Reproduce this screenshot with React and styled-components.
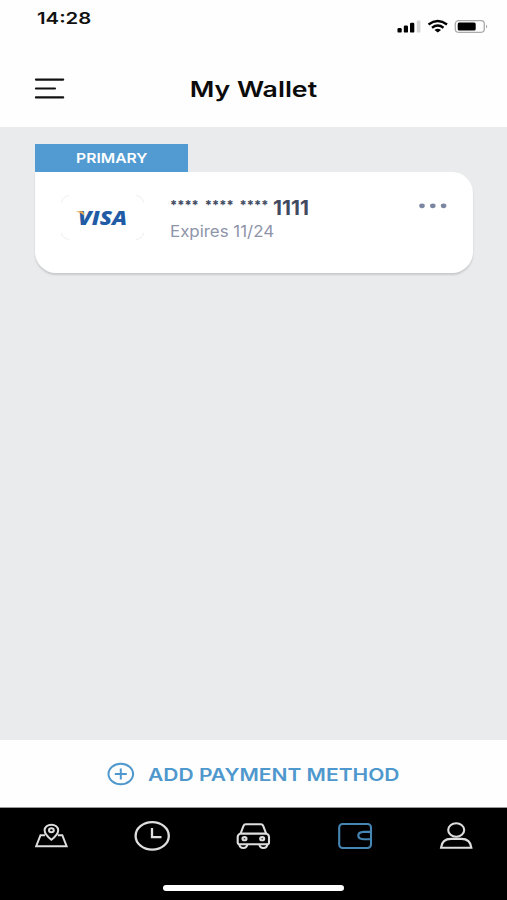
import React from 'react'
import styled, { createGlobalStyle } from 'styled-components'

const GlobalStyle = createGlobalStyle`
	* {
		box-sizing: border-box;
	}

	body {
		margin: 0;
		background-color: #eaebed;
		font-family: Inter, 'Liberation Sans', sans-serif;
	}

	svg {
		display: block;
	}
`

const Screen = styled.div`
	display: flex;
	flex-direction: column;
	width: 100%;
	height: 900px;
	overflow: hidden;
`

/* wide lettering: glyphs are stretched sideways from their origin */
const Wide = styled.span`
	display: inline-block;
	white-space: pre;
	transform: scaleX(${props => props.$stretch});
	transform-origin: ${props => props.$origin || 'left'} center;
`

const StatusBar = styled.div`
	display: flex;
	justify-content: space-between;
	height: 50px;
	padding: 0 18px 0 37px;
	background-color: #fefefe;
`

const Time = styled.div`
	padding-top: 8px;
	color: #111;
	font-size: 16px;
	font-weight: 600;
	line-height: 21px;
`

const StatusIcons = styled.div`
	padding-top: 19px;
`

const Header = styled.header`
	display: grid;
	grid-template-columns: 100px 1fr 100px;
	align-items: center;
	height: 77px;
	background-color: #fefefe;
`

const MenuButton = styled.button`
	padding: 0 0 0 34px;
	border: 0;
	background: none;
`

const Title = styled.h1`
	margin: 0;
	color: #0b0b0b;
	font-size: 21.5px;
	font-weight: 600;
	line-height: 28px;
	text-align: center;
`

const Content = styled.main`
	flex: 1;
	padding: 17px 34px 0 35px;
	background-color: #eaebed;
`

const Badge = styled.div`
	width: 153px;
	height: 28px;
	background-color: #519bd2;
	color: #fff;
	font-size: 13.5px;
	font-weight: 600;
	line-height: 29px;
	text-align: center;
`

const Card = styled.section`
	display: flex;
	height: 101px;
	padding: 23px 25px 0 26px;
	border-radius: 0 21px 21px 21px;
	background-color: #fff;
	box-shadow: 0 2px 2px rgba(0, 0, 0, 0.14);
`

const CardLogo = styled.div`
	display: flex;
	align-items: center;
	justify-content: center;
	width: 83px;
	height: 45px;
`

const CardInfo = styled.div`
	flex: 1;
	padding-left: 26px;
`

const CardNumber = styled.div`
	display: flex;
	height: 25px;
	color: #414a5f;
	line-height: 27px;
`

const Stars = styled.div`
	width: 103px;
	font-size: 13px;
	font-weight: 700;
	line-height: 20px;
	word-spacing: 3px;
`

const LastDigits = styled.div`
	font-size: 20px;
	font-weight: 700;
`

const Expiry = styled.div`
	color: #8e94aa;
	font-size: 16px;
	line-height: 22px;
`

const MoreButton = styled.button`
	align-self: flex-start;
	padding: 8px 0 0;
	border: 0;
	background: none;
`

const AddButton = styled.button`
	display: flex;
	align-items: center;
	height: 68px;
	padding: 1px 0 0 107px;
	border: 0;
	border-bottom: 1px solid #999;
	background-color: #fefefe;
	color: #4f98cd;
	font-family: inherit;
	font-size: 17px;
	font-weight: 600;
`

const AddLabel = styled.span`
	padding: 1px 0 0 13px;
`

const TabBar = styled.nav`
	height: 92px;
	background-color: #000;
`

const Tabs = styled.div`
	display: grid;
	grid-template-columns: repeat(5, 1fr);
	height: 77px;
`

const Tab = styled.a`
	display: flex;
	justify-content: center;
	padding-top: 10px;
	color: ${props => (props.$active ? '#4586b5' : '#dedede')};
`

const HomeIndicator = styled.div`
	width: 181px;
	height: 6px;
	margin: 0 auto;
	border-radius: 3px;
	background-color: #fff;
`

const SignalIcons = () => (
	<svg width='92' height='15' viewBox='0 0 92 15'>
		<rect x='0.5' y='9' width='4.2' height='4.6' rx='1.2' />
		<rect x='6.8' y='6.6' width='4.2' height='7' rx='1.2' />
		<rect x='13' y='3.7' width='4.3' height='9.9' rx='1.2' />
		<rect x='19.8' y='1.5' width='3.6' height='12.1' rx='1.2' fill='#d5d5d5' />
		<g fill='none' stroke='#000' strokeWidth='2.4'>
			<path d='M31.5 5.5Q40.8 -1.3 50 5.5' />
			<path d='M35 8.8Q40.8 4.4 46.5 8.8' />
		</g>
		<path d='M37.5 11Q40.8 8.6 44 11L40.8 13.6Z' />
		<rect x='58.3' y='1.7' width='29' height='11.6' rx='3.2' fill='none' stroke='#aaa' strokeWidth='1.3' />
		<rect x='60.7' y='3.4' width='18' height='8.1' rx='1.5' />
		<path d='M89 5.4Q91.4 7.5 89 9.6Z' fill='#aaa' />
	</svg>
)

const MenuIcon = () => (
	<svg width='32' height='24' viewBox='0 0 32 24' fill='none' stroke='#111' strokeWidth='2.1' strokeLinecap='round'>
		<path d='M1.9 2.6H29.2M1.9 11.5H21M1.9 20.4H29.2' />
	</svg>
)

const VisaLogo = () => (
	<svg width='83' height='45' viewBox='0 0 83 45'>
		<path
			d='M.5 7.5Q1.5 1.5 8 .5M75 .5Q81.5 1.5 82.5 7.5M.5 38Q1.5 43.5 8 44.5M75 44.5Q81.5 43.5 82.5 38'
			fill='none'
			stroke='#eee'
		/>
		<text
			x='17'
			y='30'
			fill='#215ba5'
			fontFamily='Open Sans, sans-serif'
			fontSize='19'
			fontStyle='italic'
			fontWeight='800'
			textLength='49'
			lengthAdjust='spacingAndGlyphs'
		>
			VISA
		</text>
		<path d='M14.6 16.2H20.5Q22.3 16.2 22.6 17.6L23.2 20.4Q20 17.6 14.6 16.2Z' fill='#e9a64b' />
	</svg>
)

const DotsIcon = () => (
	<svg width='30' height='6' viewBox='0 0 30 6' fill='#7b87a1'>
		<ellipse cx='4' cy='2.8' rx='2.8' ry='2.4' />
		<ellipse cx='14.8' cy='2.8' rx='2.8' ry='2.4' />
		<ellipse cx='25.6' cy='2.8' rx='2.8' ry='2.4' />
	</svg>
)

const PlusIcon = () => (
	<svg width='28' height='24' viewBox='0 0 28 24' fill='none' stroke='currentColor' strokeWidth='2'>
		<ellipse cx='13.8' cy='12' rx='12.3' ry='10.2' />
		<path d='M7.8 12H19.8M13.8 6.6V17.4' />
	</svg>
)

const MapIcon = () => (
	<svg width='36' height='36' viewBox='0 0 36 36' fill='none' stroke='currentColor' strokeWidth='2'>
		<path d='M12 17.2H7.5L3.2 28.2H33.6L29.3 17.2H24.8' />
		<path d='M18.4 21.8Q11.6 16.5 11.6 12.3A6.8 5.6 0 0 1 25.2 12.3Q25.2 16.5 18.4 21.8Z' />
		<ellipse cx='18.4' cy='12.3' rx='2.4' ry='2' />
	</svg>
)

const ClockIcon = () => (
	<svg width='38' height='36' viewBox='0 0 38 36' fill='none' stroke='currentColor' strokeWidth='2.3'>
		<ellipse cx='19.2' cy='17.9' rx='16.6' ry='13.7' />
		<path d='M19 10V19.2H28.5' />
	</svg>
)

const CarIcon = () => (
	<svg width='36' height='36' viewBox='0 0 36 36' fill='none' stroke='currentColor' strokeWidth='2.1'>
		<path d='M5.6 15.5L8.5 7.9Q9.1 6.2 10.8 6.2H25.9Q27.6 6.2 28.2 7.9L31.1 15.5' />
		<path d='M5.2 15.6H31.5Q34 16.6 34 19V24.6Q34 26.2 32.4 26.2H4.3Q2.7 26.2 2.7 24.6V19Q2.7 16.6 5.2 15.6Z' />
		<path d='M4.2 26.2Q4.6 30 8.3 30T12.4 26.2M24.3 26.2Q24.7 30 28.4 30T32.5 26.2' />
		<ellipse cx='9.5' cy='20.7' rx='2' ry='1.6' />
		<ellipse cx='27.2' cy='20.7' rx='2' ry='1.6' />
	</svg>
)

const WalletIcon = () => (
	<svg width='36' height='36' viewBox='0 0 36 36' fill='none' stroke='currentColor' strokeWidth='2.1'>
		<rect x='2.2' y='6' width='31.8' height='24' rx='3.5' />
		<path d='M34 13.9H26.5Q21.3 14.1 21.3 17.6T26.5 21.3H34' />
	</svg>
)

const UserIcon = () => (
	<svg width='36' height='36' viewBox='0 0 36 36' fill='none' stroke='currentColor' strokeWidth='2.1'>
		<ellipse cx='18.2' cy='12' rx='8' ry='6.8' />
		<path d='M3 29.8Q4 20.9 13 20.9H23.4Q32.4 20.9 33.4 29.8Z' />
	</svg>
)

export default () => {
	return (
		<Screen>
			<GlobalStyle />
			<StatusBar>
				<Time>
					<Wide $stretch={1.27}>14:28</Wide>
				</Time>
				<StatusIcons>
					<SignalIcons />
				</StatusIcons>
			</StatusBar>
			<Header>
				<MenuButton aria-label='Menu'>
					<MenuIcon />
				</MenuButton>
				<Title>
					<Wide $stretch={1.24} $origin='center'>My Wallet</Wide>
				</Title>
			</Header>
			<Content>
				<Badge>
					<Wide $stretch={1.16} $origin='center'>PRIMARY</Wide>
				</Badge>
				<Card>
					<CardLogo>
						<VisaLogo />
					</CardLogo>
					<CardInfo>
						<CardNumber>
							<Stars>
								<Wide $stretch={0.99}>**** **** ****</Wide>
							</Stars>
							<LastDigits>
								<Wide $stretch={1.04}>1111</Wide>
							</LastDigits>
						</CardNumber>
						<Expiry>
							<Wide $stretch={1.055}>Expires 11/24</Wide>
						</Expiry>
					</CardInfo>
					<MoreButton aria-label='More'>
						<DotsIcon />
					</MoreButton>
				</Card>
			</Content>
			<AddButton>
				<PlusIcon />
				<AddLabel>
					<Wide $stretch={1.235}>ADD PAYMENT METHOD</Wide>
				</AddLabel>
			</AddButton>
			<TabBar>
				<Tabs>
					<Tab><MapIcon /></Tab>
					<Tab><ClockIcon /></Tab>
					<Tab><CarIcon /></Tab>
					<Tab $active><WalletIcon /></Tab>
					<Tab><UserIcon /></Tab>
				</Tabs>
				<HomeIndicator />
			</TabBar>
		</Screen>
	)
}
